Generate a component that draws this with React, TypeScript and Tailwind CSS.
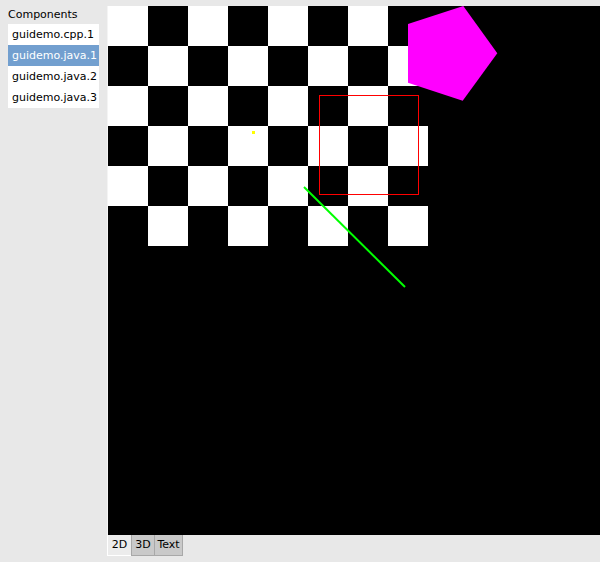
const items = ["guidemo.cpp.1", "guidemo.java.1", "guidemo.java.2", "guidemo.java.3"];

const Canvas = () => {
    const cells = [];
    for (let r = 0; r < 6; r++) {
        for (let c = 0; c < 8; c++) {
            if ((r + c) % 2 === 0) {
                cells.push(<rect key={`${r}-${c}`} x={c * 40} y={r * 40} width={40} height={40} fill="#fff" />);
            }
        }
    }
    return <svg width="492" height="529" className="block bg-black" shapeRendering="crispEdges">
        {cells}
        <polygon points="355.3,0 389.3,47.3 354.7,94.7 300,76.7 300,18" fill="#ff00ff" shapeRendering="auto" />
        <rect x={211.5} y={89.5} width={99} height={99} fill="none" stroke="#ff0000" strokeWidth={1} />
        <rect x={144} y={125} width={3} height={3} fill="#ffff00" />
        <line x1={196} y1={181} x2={297} y2={281} stroke="#00ff00" strokeWidth={2} shapeRendering="auto" />
    </svg>
}

const App = () => {
    return <div className="w-[600px] h-[562px] bg-[#e8e8e8] flex font-['DejaVu_Sans',sans-serif] text-[11px] text-black overflow-hidden">
        <aside className="w-[107px] shrink-0 px-2">
            <h3 className="h-[24px] pt-[8px] leading-[13px]">Components</h3>
            <ul className="bg-white w-[91px]">
                {items.map((it, i) => (
                    <li key={it} className={`h-[21px] leading-[21px] pl-1 ${i === 1 ? "bg-[#729fcf] text-white" : ""}`}>{it}</li>
                ))}
            </ul>
        </aside>
        <section className="flex-1 flex flex-col pt-[6px]">
            <div className="border-l border-[#f4f4f4] bg-black">
                <Canvas />
            </div>
            <div className="flex h-[21px] leading-[20px]">
                <div className="w-[24px] bg-[#ececec] border-l border-white border-b border-[#a8a8a8] text-center">2D</div>
                <div className="w-[24px] bg-[#c9c9c9] border-x border-b border-[#a8a8a8] text-center">3D</div>
                <div className="w-[28px] bg-[#c9c9c9] border-r border-b border-[#a8a8a8] text-center">Text</div>
            </div>
        </section>
    </div>
}

export default App
